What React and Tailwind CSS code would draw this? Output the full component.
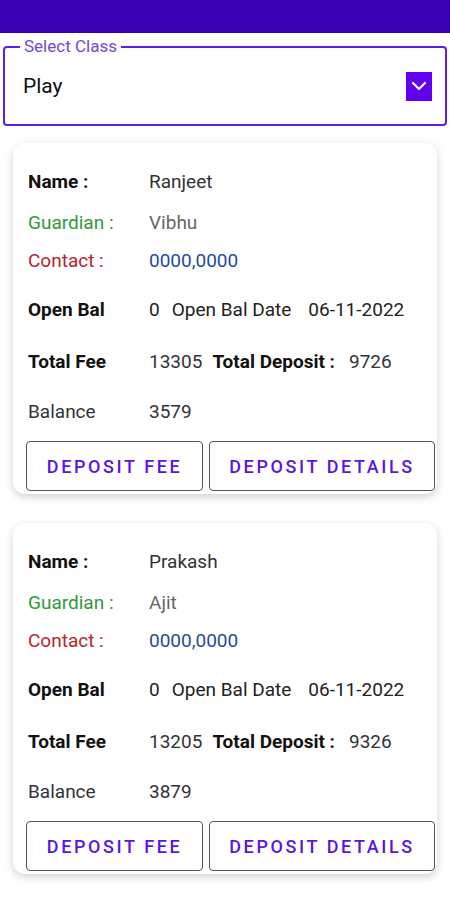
import React from 'react';

const students = [
  { name: 'Ranjeet', guardian: 'Vibhu', contact: '0000,0000', openBal: 0, openDate: '06-11-2022', totalFee: 13305, totalDeposit: 9726, balance: 3579 },
  { name: 'Prakash', guardian: 'Ajit', contact: '0000,0000', openBal: 0, openDate: '06-11-2022', totalFee: 13205, totalDeposit: 9326, balance: 3879 },
];

const StudentCard = ({ s }) => (
  <div className="mx-[13px] bg-white rounded-[12px] shadow-[0_3px_8px_rgba(0,0,0,0.18)] pl-[13px] pr-[2px] pt-[27px] pb-[3px]">
    <div className="px-[2px] text-[19px] leading-6">
      <div className="flex">
        <span className="w-[121px] font-bold text-[#111]">Name :</span>
        <span className="text-[#333]">{s.name}</span>
      </div>
      <div className="flex mt-[17px]">
        <span className="w-[121px] text-[#2f9a3a]">Guardian :</span>
        <span className="text-[#666]">{s.guardian}</span>
      </div>
      <div className="flex mt-[14px]">
        <span className="w-[121px] text-[#b52530]">Contact :</span>
        <span className="text-[#1f4c9c]">{s.contact}</span>
      </div>
      <div className="flex mt-[25px] text-[#222]">
        <span className="w-[121px] font-bold text-[#111]">Open Bal</span>
        <span>{s.openBal}</span>
        <span className="ml-[12px]">Open Bal Date</span>
        <span className="ml-[17px]">{s.openDate}</span>
      </div>
      <div className="flex mt-[28px] text-[#333]">
        <span className="w-[121px] font-bold text-[#111]">Total Fee</span>
        <span>{s.totalFee}</span>
        <span className="ml-[10px] font-bold text-[#111]">Total Deposit :</span>
        <span className="ml-[14px]">{s.totalDeposit}</span>
      </div>
      <div className="flex mt-[26px] text-[#333]">
        <span className="w-[121px]">Balance</span>
        <span>{s.balance}</span>
      </div>
    </div>
    <div className="flex gap-[6px] mt-[17px]">
      <button className="w-[177px] h-[50px] border-[1.5px] border-[#555] rounded-[4px] text-[18px] font-medium tracking-[2.6px] text-[#5a14e6] bg-white">
        DEPOSIT FEE
      </button>
      <button className="flex-1 h-[50px] border-[1.5px] border-[#555] rounded-[4px] text-[18px] font-medium tracking-[2.6px] text-[#5a14e6] bg-white">
        DEPOSIT DETAILS
      </button>
    </div>
  </div>
);

export default function App() {
  return (
    <div className="w-[450px] h-[900px] bg-white overflow-hidden" style={{ fontFamily: 'Roboto, "Noto Sans", sans-serif' }}>
      {/* App bar */}
      <div className="h-[33px] bg-[#3a00b4]"></div>

      {/* Select class */}
      <div className="relative mx-[3px] mt-[13px] h-[80px] border-2 border-[#5d1fe6] rounded-[4px] flex items-center justify-between pl-[18px] pr-[13px]">
        <span className="absolute -top-[12px] left-[15px] px-[4px] bg-white text-[17px] leading-5 text-[#7446e0]">Select Class</span>
        <span className="text-[21px] text-[#111] mt-[2px]">Play</span>
        <span className="w-[26px] h-[29px] bg-[#6200ee] flex items-center justify-center">
          <svg width="16" height="10" viewBox="0 0 16 10" fill="none">
            <path d="M2 2l6 6 6-6" stroke="white" strokeWidth="2.2" strokeLinecap="round" strokeLinejoin="round" />
          </svg>
        </span>
      </div>

      <div className="mt-[17px] flex flex-col gap-[29px]">
        {students.map((s, i) => (
          <StudentCard key={i} s={s} />
        ))}
      </div>
    </div>
  );
}
